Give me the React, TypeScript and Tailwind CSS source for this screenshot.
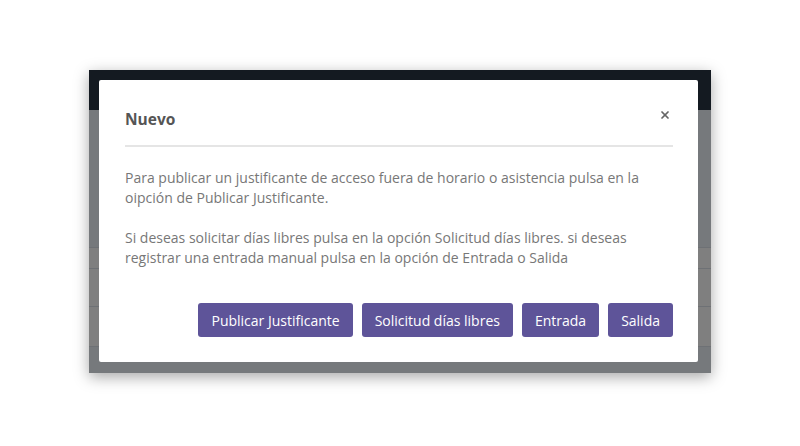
import { X } from "lucide-react";

const buttons = ["Publicar Justificante", "Solicitud días libres", "Entrada", "Salida"];

export default function App() {
	return (
		<main className="w-[800px] h-[446px] bg-white pl-[89px] pt-[70px] font-['Open_Sans',sans-serif]">
			<div className="relative w-[622px] h-[303px] flex flex-col shadow-[0_4px_14px_rgba(0,0,0,0.35)]">
				<div className="h-[40px] bg-[#141a21]" />
				<div className="flex-1 flex flex-col bg-[#76797c]">
					<div className="h-[137px]" />
					<div className="h-[21px] bg-[#7f7f7f] border-t border-[#6e7175]" />
					<div className="h-[38px] bg-[#7f7f7f] border-t border-[#6e7175]" />
					<div className="h-[40px] bg-[#7f7f7f] border-t border-[#6e7175]" />
					<div className="flex-1 border-t border-[#6e7175]" />
				</div>

				<div className="absolute left-[10px] top-[10px] w-[599px] h-[282px] bg-white rounded-[2px] pl-[26px] pr-[25px] flex flex-col">
					<div className="h-[67px] flex items-center justify-between border-b-2 border-[#e5e5e5] pt-[11px]">
						<h2 className="text-[15.5px] font-bold text-[#555] mt-[4px]">Nuevo</h2>
						<X className="w-[12px] h-[12px] text-[#666] mr-[2px] -mt-[7px]" strokeWidth={3.5} />
					</div>

					<div className="pt-[21px] text-[14px] leading-[20px] text-[#777]">
						<p>
							Para publicar un justificante de acceso fuera de horario o asistencia pulsa en la
							<br />
							oipción de Publicar Justificante.
						</p>
						<p className="mt-[20px]">
							Si deseas solicitar días libres pulsa en la opción Solicitud días libres. si deseas
							<br />
							registrar una entrada manual pulsa en la opción de Entrada o Salida
						</p>
					</div>

					<div className="flex justify-end gap-[9px] mt-[35px]">
						{buttons.map(b => (
							<button
								key={b}
								className="h-[34px] px-[13px] rounded-[3px] bg-[#5e5499] text-white text-[14px] font-medium"
							>
								{b}
							</button>
						))}
					</div>
				</div>
			</div>
		</main>
	);
}
